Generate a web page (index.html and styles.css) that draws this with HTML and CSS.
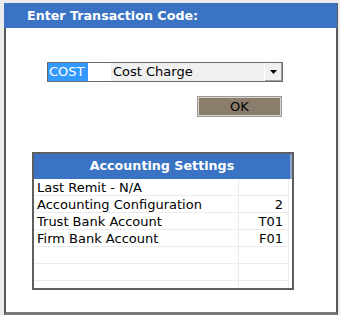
FILE: index.html
```html
<!DOCTYPE html>
<html>
<head>
<meta charset="utf-8">
<link rel="stylesheet" href="styles.css">
</head>
<body>
<div class="window">
  <div class="title">Enter Transaction Code:</div>
  <div class="content">
    <div class="combo">
      <span class="code"><span class="sel">COST</span></span>
      <span class="desc">Cost Charge</span>
      <span class="drop"><svg width="7" height="4" viewBox="0 0 7 4"><path d="M0 0H7L3.5 4Z" fill="#000"/></svg></span>
    </div>
    <div class="actions"><button class="ok">OK</button></div>
    <div class="settings">
      <div class="shead">Accounting Settings</div>
      <div class="grid">
        <div class="c l">Last Remit - N/A</div><div class="c r"></div>
        <div class="c l">Accounting Configuration</div><div class="c r">2</div>
        <div class="c l">Trust Bank Account</div><div class="c r">T01</div>
        <div class="c l">Firm Bank Account</div><div class="c r">F01</div>
        <div class="c l"></div><div class="c r"></div>
        <div class="c l"></div><div class="c r"></div>
        <div class="c l"></div><div class="c r"></div>
      </div>
    </div>
  </div>
</div>
</body>
</html>
```
FILE: styles.css
```css
html, body {
  margin: 0;
  padding: 0;
  background: #ececec;
  font-family: "DejaVu Sans", Verdana, sans-serif;
  font-size: 13px;
  color: #000;
}
.window {
  box-sizing: border-box;
  margin: 3px 2px 0 4px;
  width: 334px;
  height: 312px;
  background: #fff;
  border-style: solid;
  border-color: #5a5a5a;
  border-width: 0 2px 3px 2px;
  border-bottom-color: #7a7a7a;
}
.title {
  margin: 0 -1px 0 -2px;
  height: 25px;
  background: #3a73c3;
  color: #fff;
  font-weight: bold;
  font-size: 12.7px;
  line-height: 25px;
  padding-left: 23px;
}
.content {
  padding: 34px 0 0 41px;
}
.combo {
  box-sizing: border-box;
  display: flex;
  width: 236px;
  height: 20px;
  border: 1px solid #6a6a6a;
  background: #f0f0f0;
}
.code {
  width: 63px;
  background: #fff;
  display: flex;
  align-items: center;
}
.sel {
  background: #3399ff;
  color: #fff;
  line-height: 18px;
  padding: 0 3px 0 1px;
}
.desc {
  flex: 1;
  line-height: 18px;
  padding-left: 2px;
}
.drop {
  width: 17px;
  border-left: 1px solid #fff;
  box-shadow: inset -1px -1px 0 #a0a0a0;
  background: #f0f0f0;
  display: flex;
  align-items: center;
  justify-content: center;
}
.actions {
  display: flex;
  justify-content: flex-end;
  width: 234px;
  margin-top: 15px;
}
.ok {
  width: 83px;
  height: 19px;
  margin: 0;
  padding: 0;
  background: #8b7d6b;
  border: 1px solid #d8d2c8;
  outline: 1px solid #9a9a9a;
  font-family: inherit;
  font-size: 13px;
  color: #000;
}
.settings {
  box-sizing: border-box;
  margin: 36px 0 0 -15px;
  width: 262px;
  height: 138px;
  border: 2px solid #5f5f5f;
  overflow: hidden;
}
.shead {
  height: 25px;
  background: #3a73c3;
  color: #fff;
  font-weight: bold;
  font-size: 12.7px;
  line-height: 24px;
  text-align: center;
  border-right: 2px solid #8aa6cf;
}
.grid {
  display: grid;
  grid-template-columns: 205px 50px;
}
.c {
  height: 16px;
  line-height: 17px;
  border-bottom: 1px solid #ececec;
  border-right: 1px solid #ececec;
  white-space: nowrap;
}
.l {
  padding-left: 3px;
}
.r {
  text-align: right;
  padding-right: 5px;
}
```
